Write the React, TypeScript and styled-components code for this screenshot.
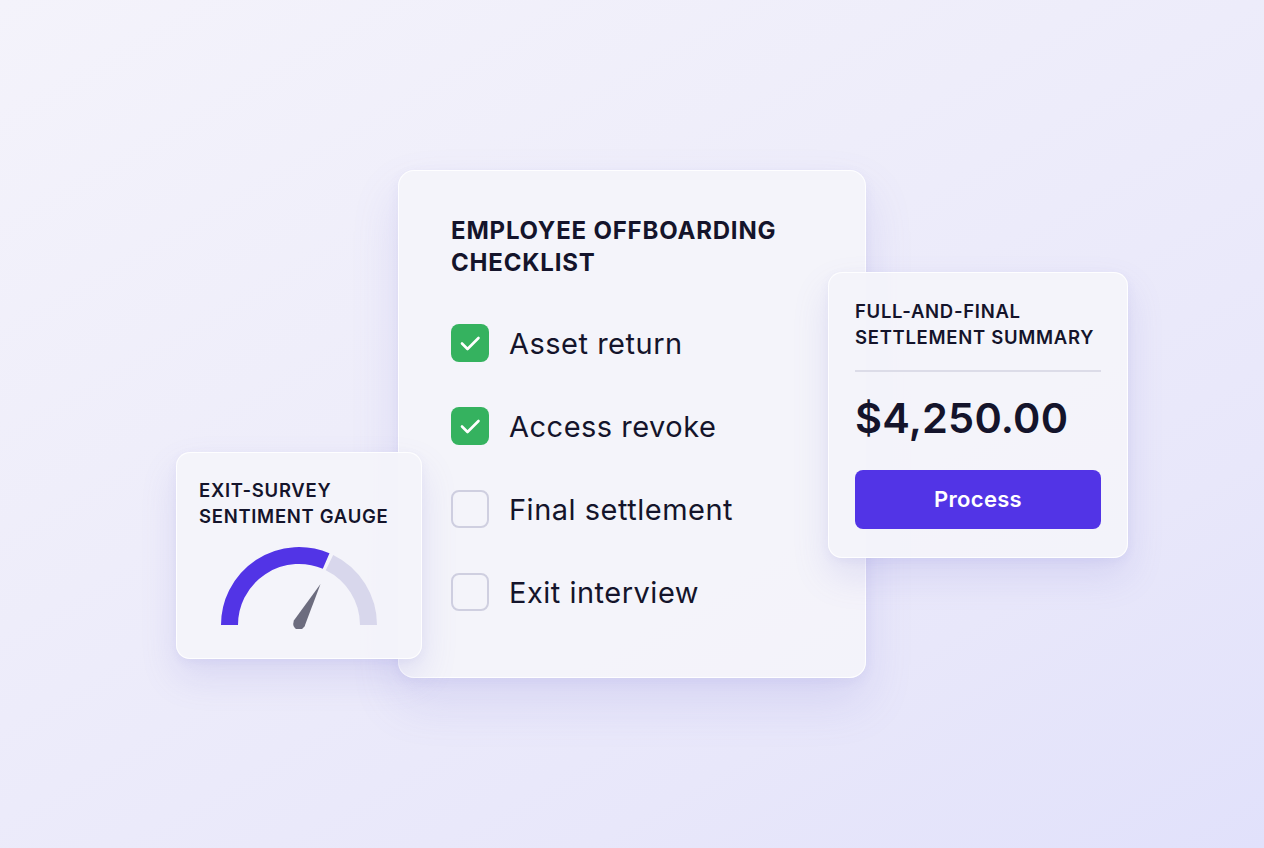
import React from "react";
import styled, {createGlobalStyle} from "styled-components";

const GlobalStyle = createGlobalStyle`
  html, body {
    margin: 0;
    padding: 0;
  }
  body {
    font-family: Inter, "Noto Sans", "Liberation Sans", sans-serif;
    color: #14142b;
  }
`

const Stage = styled.div`
  width: 1264px;
  height: 848px;
  display: flex;
  align-items: center;
  justify-content: center;
  background: linear-gradient(150deg, #f4f3fb 0%, #eeedfa 40%, #e8e7fa 75%, #e1e1fb 100%);
  overflow: hidden;
`

const Card = styled.div`
  box-sizing: border-box;
  background: rgba(244, 244, 250, 0.96);
  border: 1.5px solid rgba(255, 255, 255, 0.95);
  border-radius: 16px;
  box-shadow: 0 24px 48px rgba(120, 110, 210, 0.16), 0 4px 12px rgba(120, 110, 210, 0.08);
`

const MainCard = styled(Card)`
  position: relative;
  width: 468px;
  height: 508px;
  padding: 44px 52px;
  display: flex;
  flex-direction: column;
`

const Title = styled.h1`
  margin: 0 0 45px;
  font-size: 24px;
  line-height: 32px;
  font-weight: 700;
  letter-spacing: 0.8px;
  color: #14142b;
`

const List = styled.ul`
  list-style: none;
  margin: 0;
  padding: 0;
  display: flex;
  flex-direction: column;
  gap: 45px;
`

const Item = styled.li`
  display: flex;
  align-items: center;
  gap: 20px;
  height: 38px;
  font-size: 29px;
  letter-spacing: 0.5px;
  font-weight: 400;
  color: #14142b;
`

const Box = styled.span<{ $checked: boolean }>`
  box-sizing: border-box;
  width: 38px;
  height: 38px;
  border-radius: 8px;
  display: flex;
  align-items: center;
  justify-content: center;
  flex-shrink: 0;
  background: ${p => p.$checked ? "#35b25f" : "transparent"};
  border: ${p => p.$checked ? "none" : "2px solid #cfcfe0"};
`

const SideCard = styled(Card)<{ $left: number; $top: number; $w: number; $h: number }>`
  position: absolute;
  left: ${p => p.$left}px;
  top: ${p => p.$top}px;
  width: ${p => p.$w}px;
  height: ${p => p.$h}px;
  border-radius: 14px;
  display: flex;
  flex-direction: column;
  box-shadow: 0 18px 36px rgba(120, 110, 210, 0.16), 0 3px 10px rgba(120, 110, 210, 0.08);
`

const SmallTitle = styled.h2`
  margin: 0;
  font-size: 18.5px;
  line-height: 26px;
  font-weight: 600;
  letter-spacing: 0.7px;
  color: #14142b;
`

const SummaryBody = styled.div`
  padding: 25px 26px 0;
  display: flex;
  flex-direction: column;
`

const Divider = styled.hr`
  border: none;
  height: 1.5px;
  background: #dcdce8;
  margin: 20px 0 21px;
`

const Amount = styled.div`
  font-size: 41.5px;
  line-height: 50px;
  font-weight: 600;
  letter-spacing: 0.2px;
  color: #14142b;
`

const ProcessButton = styled.button`
  margin-top: 27px;
  height: 59px;
  border: none;
  border-radius: 8px;
  background: #5234e6;
  color: #fff;
  font-family: inherit;
  font-size: 22px;
  font-weight: 600;
  letter-spacing: 0.3px;
  cursor: pointer;
`

const GaugeBody = styled.div`
  padding: 24px 22px 0;
  display: flex;
  flex-direction: column;
`

const GaugeWrap = styled.div`
  display: flex;
  justify-content: center;
  margin-top: 16px;
`

const items = [
    {label: "Asset return", done: true},
    {label: "Access revoke", done: true},
    {label: "Final settlement", done: false},
    {label: "Exit interview", done: false},
]

function Check() {
    return (
        <svg width="38" height="38" viewBox="0 0 38 38" fill="none">
            <path d="M11 19.5l5.5 5.5 11-11" stroke="#fff" strokeWidth="2.6" strokeLinecap="round" strokeLinejoin="round"/>
        </svg>
    )
}

function arc(cx: number, cy: number, r: number, a1: number, a2: number) {
    const p = (a: number) => [cx + r * Math.cos(a * Math.PI / 180), cy - r * Math.sin(a * Math.PI / 180)]
    const [x1, y1] = p(a1)
    const [x2, y2] = p(a2)
    return `M${x1.toFixed(2)} ${y1.toFixed(2)} A${r} ${r} 0 0 1 ${x2.toFixed(2)} ${y2.toFixed(2)}`
}

function Gauge() {
    // centre at (80, 80), mean radius 70, 17px band
    return (
        <svg width="160" height="84" viewBox="0 0 160 84">
            <path d={arc(80, 80, 69.5, 180, 67)} stroke="#5234e6" strokeWidth="17" fill="none"/>
            <path d={arc(80, 80, 69.5, 64, 0)} stroke="#d8d7ec" strokeWidth="17" fill="none"/>
            <path d="M74.5 76 L101.5 39 L85.5 81.5 Q80 87 74.5 76 Z" fill="#6c6c7e"/>
            <circle cx="80" cy="79" r="5.8" fill="#6c6c7e"/>
        </svg>
    )
}

export default function App() {
    return (
        <Stage>
            <GlobalStyle/>
            <MainCard>
                <Title>EMPLOYEE OFFBOARDING<br/>CHECKLIST</Title>
                <List>
                    {items.map(item =>
                        <Item key={item.label}>
                            <Box $checked={item.done}>{item.done && <Check/>}</Box>
                            <span>{item.label}</span>
                        </Item>
                    )}
                </List>
                <SideCard $left={429} $top={101} $w={300} $h={286}>
                    <SummaryBody>
                        <SmallTitle>FULL-AND-FINAL<br/>SETTLEMENT SUMMARY</SmallTitle>
                        <Divider/>
                        <Amount>$4,250.00</Amount>
                        <ProcessButton>Process</ProcessButton>
                    </SummaryBody>
                </SideCard>
                <SideCard $left={-223} $top={281} $w={246} $h={207}>
                    <GaugeBody>
                        <SmallTitle>EXIT-SURVEY<br/>SENTIMENT GAUGE</SmallTitle>
                        <GaugeWrap>
                            <Gauge/>
                        </GaugeWrap>
                    </GaugeBody>
                </SideCard>
            </MainCard>
        </Stage>
    );
}
